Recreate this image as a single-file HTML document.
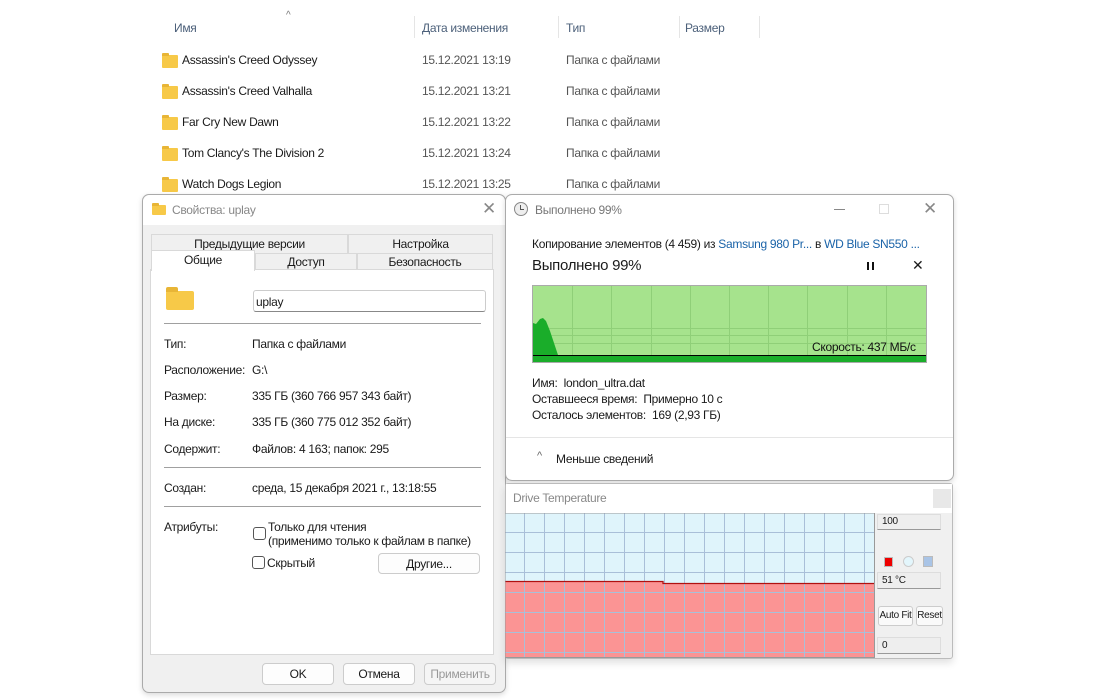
<!DOCTYPE html>
<html><head><meta charset="utf-8"><style>
*{box-sizing:border-box;margin:0;padding:0}
body{width:1100px;height:700px;background:#fff;position:relative;overflow:hidden;font-family:"Liberation Sans","DejaVu Sans",sans-serif;font-size:12px;color:#1a1a1a;letter-spacing:-0.3px}
.a{position:absolute;white-space:nowrap}
.fold{position:absolute;width:16px;height:13px;background:#f7c948;border-radius:1px}
.fold:before{content:"";position:absolute;left:0;top:-2px;width:7px;height:3px;background:#e8b536;border-radius:1px 1px 0 0}
.hdr{color:#4c607a;font-size:12px}
.gr{color:#555}
.btn{position:absolute;background:#fdfdfd;border:1px solid #ccc;border-radius:4px;text-align:center;font-size:12px;line-height:20px}
.chk{position:absolute;width:13px;height:13px;border:1px solid #555;border-radius:3px;background:#fff}
.sep{position:absolute;height:1px;background:#a0a0a0}
</style></head><body>

<div class="a hdr" style="left:174px;top:21px">Имя</div>
<div class="a" style="left:286px;top:10px;color:#777;font-size:10px">^</div>
<div class="a" style="left:414px;top:16px;width:1px;height:22px;background:#e5e5e5"></div>
<div class="a hdr" style="left:422px;top:21px">Дата изменения</div>
<div class="a" style="left:558px;top:16px;width:1px;height:22px;background:#e5e5e5"></div>
<div class="a hdr" style="left:566px;top:21px">Тип</div>
<div class="a" style="left:679px;top:16px;width:1px;height:22px;background:#e5e5e5"></div>
<div class="a hdr" style="left:685px;top:21px">Размер</div>
<div class="a" style="left:759px;top:16px;width:1px;height:22px;background:#e5e5e5"></div>

<div class="fold" style="left:162px;top:55px"></div><div class="a" style="left:182px;top:53px">Assassin's Creed Odyssey</div><div class="a gr" style="left:422px;top:53px">15.12.2021 13:19</div><div class="a gr" style="left:566px;top:53px">Папка с файлами</div>
<div class="fold" style="left:162px;top:86px"></div><div class="a" style="left:182px;top:84px">Assassin's Creed Valhalla</div><div class="a gr" style="left:422px;top:84px">15.12.2021 13:21</div><div class="a gr" style="left:566px;top:84px">Папка с файлами</div>
<div class="fold" style="left:162px;top:117px"></div><div class="a" style="left:182px;top:115px">Far Cry New Dawn</div><div class="a gr" style="left:422px;top:115px">15.12.2021 13:22</div><div class="a gr" style="left:566px;top:115px">Папка с файлами</div>
<div class="fold" style="left:162px;top:148px"></div><div class="a" style="left:182px;top:146px">Tom Clancy's The Division 2</div><div class="a gr" style="left:422px;top:146px">15.12.2021 13:24</div><div class="a gr" style="left:566px;top:146px">Папка с файлами</div>
<div class="fold" style="left:162px;top:179px"></div><div class="a" style="left:182px;top:177px">Watch Dogs Legion</div><div class="a gr" style="left:422px;top:177px">15.12.2021 13:25</div><div class="a gr" style="left:566px;top:177px">Папка с файлами</div>

<div class="a" style="left:142px;top:194px;width:364px;height:499px;background:#f0f0f0;border:1px solid #aaa;border-radius:7px;box-shadow:0 2px 6px rgba(0,0,0,.15)"></div>
<div class="a" style="left:143px;top:195px;width:362px;height:30px;background:#fff;border-radius:7px 7px 0 0"></div>
<div class="fold" style="left:152px;top:205px;width:14px;height:10px"></div>
<div class="a" style="left:172px;top:203px;color:#888">Свойства: uplay</div>
<div class="a" style="left:482px;top:199px;color:#888;font-size:17px">✕</div>

<div class="a" style="left:151px;top:234px;width:197px;height:19px;border:1px solid #d9d9d9;border-bottom:none;text-align:center;line-height:19px">Предыдущие версии</div>
<div class="a" style="left:348px;top:234px;width:145px;height:19px;border:1px solid #d9d9d9;border-bottom:none;text-align:center;line-height:19px">Настройка</div>
<div class="a" style="left:255px;top:253px;width:102px;height:17px;border:1px solid #d9d9d9;text-align:center;line-height:17px">Доступ</div>
<div class="a" style="left:357px;top:253px;width:136px;height:17px;border:1px solid #d9d9d9;text-align:center;line-height:17px">Безопасность</div>
<div class="a" style="left:150px;top:269px;width:344px;height:386px;background:#fff;border:1px solid #d9d9d9"></div>
<div class="a" style="left:151px;top:250px;width:104px;height:21px;background:#fff;border:1px solid #d9d9d9;border-bottom:none;text-align:center;line-height:18px">Общие</div>

<div class="a" style="left:166px;top:291px;width:28px;height:19px;background:#f7c948;border-radius:2px"></div>
<div class="a" style="left:166px;top:287px;width:12px;height:5px;background:#e8b536;border-radius:2px 2px 0 0"></div>
<div class="a" style="left:253px;top:290px;width:233px;height:22px;border:1px solid #ccc;border-bottom:1px solid #888;border-radius:3px;padding:4px 2px">uplay</div>
<div class="sep" style="left:164px;top:323px;width:317px"></div>
<div class="a" style="left:164px;top:337px">Тип:</div><div class="a" style="left:252px;top:337px">Папка с файлами</div>
<div class="a" style="left:164px;top:363px">Расположение:</div><div class="a" style="left:252px;top:363px">G:\</div>
<div class="a" style="left:164px;top:389px">Размер:</div><div class="a" style="left:252px;top:389px">335 ГБ (360 766 957 343 байт)</div>
<div class="a" style="left:164px;top:415px">На диске:</div><div class="a" style="left:252px;top:415px">335 ГБ (360 775 012 352 байт)</div>
<div class="a" style="left:164px;top:442px">Содержит:</div><div class="a" style="left:252px;top:442px">Файлов: 4 163; папок: 295</div>
<div class="sep" style="left:164px;top:467px;width:317px"></div>
<div class="a" style="left:164px;top:481px">Создан:</div><div class="a" style="left:252px;top:481px">среда, 15 декабря 2021 г., 13:18:55</div>
<div class="sep" style="left:164px;top:506px;width:317px"></div>
<div class="a" style="left:164px;top:520px">Атрибуты:</div>
<div class="chk" style="left:253px;top:527px"></div>
<div class="a" style="left:268px;top:520px;line-height:14px">Только для чтения<br>(применимо только к файлам в папке)</div>
<div class="chk" style="left:252px;top:556px"></div>
<div class="a" style="left:267px;top:556px">Скрытый</div>
<div class="btn" style="left:378px;top:553px;width:102px;height:21px">Другие...</div>
<div class="btn" style="left:262px;top:663px;width:72px;height:22px">OK</div>
<div class="btn" style="left:343px;top:663px;width:72px;height:22px">Отмена</div>
<div class="btn" style="left:424px;top:663px;width:72px;height:22px;color:#999;background:#f5f5f5">Применить</div>

<div class="a" style="left:505px;top:194px;width:449px;height:287px;background:#fff;border:1px solid #aaa;border-radius:7px;box-shadow:0 2px 6px rgba(0,0,0,.15)"></div>
<div class="a" style="left:514px;top:202px;width:14px;height:14px;border:1px solid #888;border-radius:50%;background:#eee"></div>
<div class="a" style="left:520px;top:205px;width:1px;height:5px;background:#555"></div>
<div class="a" style="left:520px;top:209px;width:4px;height:1px;background:#555"></div>
<div class="a" style="left:535px;top:203px;color:#777">Выполнено 99%</div>
<div class="a" style="left:834px;top:209px;width:11px;height:1px;background:#888"></div>
<div class="a" style="left:879px;top:204px;width:10px;height:10px;border:1px solid #ddd"></div>
<div class="a" style="left:923px;top:199px;color:#888;font-size:17px">✕</div>
<div class="a" style="left:532px;top:237px">Копирование элементов (4 459) из <span style="color:#1a63a8">Samsung 980 Pr...</span> в <span style="color:#1a63a8">WD Blue SN550 ...</span></div>
<div class="a" style="left:532px;top:257px;font-size:15px">Выполнено 99%</div>
<div class="a" style="left:867px;top:262px;width:2px;height:8px;background:#111"></div>
<div class="a" style="left:872px;top:262px;width:2px;height:8px;background:#111"></div>
<div class="a" style="left:912px;top:257px;font-size:14px;font-weight:bold">✕</div>
<svg class="a" style="left:532px;top:285px" width="395" height="78">
<rect x="0.5" y="0.5" width="394" height="77" fill="#a6e38d" stroke="#aaa"/>
<g stroke="#8fcf78" stroke-width="1">
<line x1="40.5" y1="1" x2="40.5" y2="70"/><line x1="79.5" y1="1" x2="79.5" y2="70"/><line x1="119.5" y1="1" x2="119.5" y2="70"/><line x1="158.5" y1="1" x2="158.5" y2="70"/><line x1="197.5" y1="1" x2="197.5" y2="70"/><line x1="236.5" y1="1" x2="236.5" y2="70"/><line x1="275.5" y1="1" x2="275.5" y2="70"/><line x1="315.5" y1="1" x2="315.5" y2="70"/><line x1="354.5" y1="1" x2="354.5" y2="70"/>
<line x1="1" y1="43.5" x2="394" y2="43.5"/><line x1="1" y1="50.5" x2="394" y2="50.5"/><line x1="1" y1="58.5" x2="394" y2="58.5"/>
</g>
<path d="M1 38 L4 39 L8 34 L11 33 L14 36 L18 46 L22 58 L26 70 L1 70Z" fill="#1aad2a"/>
<rect x="1" y="70" width="393" height="7" fill="#1aad2a"/>
<line x1="1" y1="70.5" x2="394" y2="70.5" stroke="#000"/>
<text x="280" y="66" font-family="Liberation Sans" font-size="12" letter-spacing="-0.3" fill="#111">Скорость: 437 МБ/с</text>
</svg>
<div class="a" style="left:532px;top:375px;line-height:16px">Имя:&nbsp; london_ultra.dat<br>Оставшееся время:&nbsp; Примерно 10 с<br>Осталось элементов:&nbsp; 169 (2,93 ГБ)</div>
<div class="a" style="left:506px;top:437px;width:447px;height:1px;background:#e5e5e5"></div>
<div class="a" style="left:537px;top:450px;color:#666;font-size:11px">^</div>
<div class="a" style="left:556px;top:452px">Меньше сведений</div>

<div class="a" style="left:505px;top:483px;width:448px;height:176px;background:#f0f0f0;border:1px solid #bbb;border-radius:3px;box-shadow:0 4px 8px rgba(0,0,0,.12)"></div>
<div class="a" style="left:506px;top:484px;width:446px;height:29px;background:#fff"></div>
<div class="a" style="left:513px;top:491px;color:#888">Drive Temperature</div>
<div class="a" style="left:933px;top:489px;width:18px;height:19px;background:#e8e8e8"></div>
<svg class="a" style="left:505px;top:513px" width="370" height="145">
<rect x="0" y="0" width="370" height="145" fill="#dff4fb"/>
<path d="M0 68 L158 68 L158 70 L370 70 L370 145 L0 145Z" fill="#fb9494"/>
<g stroke="#a9bfd8" stroke-width="1">
<line x1="19.5" y1="0" x2="19.5" y2="145"/><line x1="39.5" y1="0" x2="39.5" y2="145"/><line x1="59.5" y1="0" x2="59.5" y2="145"/><line x1="79.5" y1="0" x2="79.5" y2="145"/><line x1="99.5" y1="0" x2="99.5" y2="145"/><line x1="119.5" y1="0" x2="119.5" y2="145"/><line x1="139.5" y1="0" x2="139.5" y2="145"/><line x1="159.5" y1="0" x2="159.5" y2="145"/><line x1="179.5" y1="0" x2="179.5" y2="145"/><line x1="199.5" y1="0" x2="199.5" y2="145"/><line x1="219.5" y1="0" x2="219.5" y2="145"/><line x1="239.5" y1="0" x2="239.5" y2="145"/><line x1="259.5" y1="0" x2="259.5" y2="145"/><line x1="279.5" y1="0" x2="279.5" y2="145"/><line x1="299.5" y1="0" x2="299.5" y2="145"/><line x1="319.5" y1="0" x2="319.5" y2="145"/><line x1="339.5" y1="0" x2="339.5" y2="145"/><line x1="359.5" y1="0" x2="359.5" y2="145"/>
<line x1="0" y1="19.5" x2="370" y2="19.5"/><line x1="0" y1="39.5" x2="370" y2="39.5"/><line x1="0" y1="59.5" x2="370" y2="59.5"/><line x1="0" y1="79.5" x2="370" y2="79.5"/><line x1="0" y1="99.5" x2="370" y2="99.5"/><line x1="0" y1="119.5" x2="370" y2="119.5"/><line x1="0" y1="139.5" x2="370" y2="139.5"/>
</g>
<path d="M0 68.5 L158 68.5 L158 70.5 L370 70.5" stroke="#b01010" fill="none" stroke-width="1.3"/>
<rect x="0" y="0" width="369.5" height="144.5" fill="none" stroke="#999"/>
</svg>
<div class="a" style="left:877px;top:514px;width:64px;height:16px;background:#eee;border:1px solid #ddd;border-bottom-color:#999;font-size:10px;padding:1px 4px">100</div>
<div class="a" style="left:884px;top:557px;width:9px;height:10px;background:#e00;border:1px solid #bbb"></div>
<div class="a" style="left:903px;top:556px;width:11px;height:11px;background:#e3f6fc;border:1px solid #ccc;border-radius:50%"></div>
<div class="a" style="left:923px;top:556px;width:10px;height:11px;background:#a9c4e6;border:1px solid #bbb"></div>
<div class="a" style="left:877px;top:572px;width:64px;height:17px;background:#eee;border:1px solid #ddd;border-bottom-color:#999;font-size:10px;padding:2px 4px">51 °C</div>
<div class="a" style="left:878px;top:606px;width:35px;height:20px;background:#fafafa;border:1px solid #ccc;border-radius:3px;font-size:10px;line-height:18px;text-align:center">Auto Fit</div>
<div class="a" style="left:916px;top:606px;width:27px;height:20px;background:#fafafa;border:1px solid #ccc;border-radius:3px;font-size:10px;line-height:18px;text-align:center">Reset</div>
<div class="a" style="left:877px;top:637px;width:64px;height:17px;background:#eee;border:1px solid #ddd;border-bottom-color:#999;font-size:10px;padding:2px 4px">0</div>
</body></html>
